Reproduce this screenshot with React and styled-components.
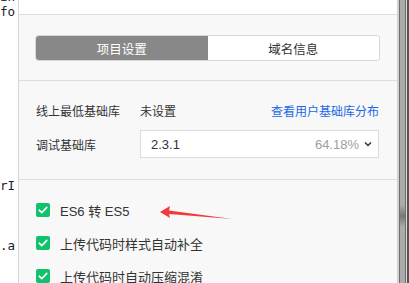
import React from "react";
import styled, { createGlobalStyle } from "styled-components";

const Global = createGlobalStyle`
  html, body { margin: 0; padding: 0; overflow: hidden; background: #fff; }
  body { font-family: "Noto Sans CJK SC", "Liberation Sans", sans-serif; }
`;

const Screen = styled.div`
  display: flex;
  width: 409px;
  height: 283px;
  overflow: hidden;
`;

const CodeStrip = styled.div`
  width: 18px;
  flex: none;
  background: #fff;
  border-right: 1px solid #d6d6d6;
  overflow: hidden;
  font-family: "DejaVu Sans Mono", "Liberation Mono", monospace;
  font-size: 12.5px;
  color: #1a1a2e;
`;

const CodeLine = styled.div`
  height: 14px;
  line-height: 14px;
  white-space: pre;
  margin-top: ${(p) => p.$mt || 0}px;
`;

const Panel = styled.div`
  flex: 1;
  background: #f8f8f8;
  display: flex;
  flex-direction: column;
  position: relative;
  color: #333;
`;

const Header = styled.div`
  height: 16px;
  background: #fff;
  border-bottom: 1px solid #dddddd;
`;

const Section = styled.div`
  padding: ${(p) => p.$pad};
  border-bottom: ${(p) => (p.$noBorder ? "none" : "1px solid #dddddd")};
`;

const Tabs = styled.div`
  display: flex;
  height: 24px;
  border-radius: 3px;
  overflow: hidden;
  box-shadow: 0 0 0 1px #d8d8d8;
`;

const Tab = styled.div`
  flex: 1;
  display: flex;
  align-items: center;
  justify-content: center;
  font-size: 12.5px;
  background: ${(p) => (p.$active ? "#888888" : "#ffffff")};
  color: ${(p) => (p.$active ? "#ffffff" : "#333")};
`;

const Row = styled.div`
  display: flex;
  align-items: center;
  height: ${(p) => p.$h}px;
  margin-top: ${(p) => p.$mt || 0}px;
  font-size: 12px;
`;

const Label = styled.div`
  width: 104px;
  flex: none;
  color: #333;
`;

const Value = styled.div`
  flex: 1;
  color: #333;
`;

const Link = styled.a`
  color: #2166e6;
  text-decoration: none;
  font-size: 12px;
`;

const Select = styled.div`
  flex: 1;
  height: 28px;
  box-sizing: border-box;
  border: 1px solid #dcdcdc;
  background: #fff;
  display: flex;
  align-items: center;
  padding: 0 6px 0 10px;
  font-family: "Liberation Sans", "Noto Sans CJK SC", sans-serif;
  font-size: 13px;
`;

const SelectValue = styled.span`
  flex: 1;
  color: #333;
`;

const Percent = styled.span`
  color: #a0a0a0;
  margin-right: 5px;
`;

const CheckList = styled.div`
  display: flex;
  flex-direction: column;
  gap: 19px;
`;

const CheckRow = styled.div`
  display: flex;
  align-items: center;
  height: 14px;
  font-size: 13px;
  color: #333;
`;

const Box = styled.span`
  width: 14px;
  height: 14px;
  border-radius: 2px;
  background: #0fc26b;
  display: inline-flex;
  align-items: center;
  justify-content: center;
  margin-right: 10px;
  flex: none;
`;

const CheckLabel = styled.span`
  font-family: "Liberation Sans", "Noto Sans CJK SC", sans-serif;
  white-space: nowrap;
`;

const Arrow = styled.svg`
  position: absolute;
  left: 139px;
  top: 203px;
`;

const Scrollbar = styled.div`
  width: 12px;
  flex: none;
  display: flex;
`;

const Stripe = styled.div`
  width: ${(p) => p.$w}px;
  background: ${(p) => p.$c};
  position: relative;
`;

const Grip = styled.div`
  position: absolute;
  left: 0;
  right: 0;
  top: 205px;
  height: 22px;
  background: linear-gradient(#aaa, #777 50%, #aaa);
`;

const Check = () => (
  <svg width="10" height="8" viewBox="0 0 10 8">
    <path d="M1.2 4.2 L3.8 6.6 L8.8 1.4" fill="none" stroke="#fff" strokeWidth="1.6" strokeLinecap="round" strokeLinejoin="round" />
  </svg>
);

export default function App() {
  return (
    <>
      <Global />
      <Screen>
        <CodeStrip>
          <CodeLine $mt={-10}>int</CodeLine>
          <CodeLine $mt={1}>fo</CodeLine>
          <CodeLine $mt={160}>rI</CodeLine>
          <CodeLine $mt={46}>.a</CodeLine>
        </CodeStrip>
        <Panel>
          <Header />
          <Section $pad="21px 18px 20px 17px">
            <Tabs>
              <Tab $active>项目设置</Tab>
              <Tab>域名信息</Tab>
            </Tabs>
          </Section>
          <Section $pad="19px 18px 21px 17px">
            <Row $h={20}>
              <Label>线上最低基础库</Label>
              <Value>未设置</Value>
              <Link>查看用户基础库分布</Link>
            </Row>
            <Row $h={28} $mt={10}>
              <Label>调试基础库</Label>
              <Select>
                <SelectValue>2.3.1</SelectValue>
                <Percent>64.18%</Percent>
                <svg width="8" height="6" viewBox="0 0 8 6">
                  <path d="M1 1.5 L4 4.5 L7 1.5" fill="none" stroke="#333" strokeWidth="1.5" />
                </svg>
              </Select>
            </Row>
          </Section>
          <Section $pad="23px 18px 0 17px" $noBorder>
            <CheckList>
              <CheckRow>
                <Box><Check /></Box>
                <CheckLabel>ES6 转 ES5</CheckLabel>
              </CheckRow>
              <CheckRow>
                <Box><Check /></Box>
                <CheckLabel>上传代码时样式自动补全</CheckLabel>
              </CheckRow>
              <CheckRow>
                <Box><Check /></Box>
                <CheckLabel>上传代码时自动压缩混淆</CheckLabel>
              </CheckRow>
            </CheckList>
          </Section>
          <Arrow width="76" height="20" viewBox="0 0 76 20">
            <polygon points="2,9 12,3 11,7.5 74,16 11,11 12,15" fill="#f23a3a" />
          </Arrow>
        </Panel>
        <Scrollbar>
          <Stripe $w={2} $c="#d2d2d2" />
          <Stripe $w={1} $c="#6f6f6f" />
          <Stripe $w={5} $c="#ababab"><Grip /></Stripe>
          <Stripe $w={1} $c="#6f6f6f" />
          <Stripe $w={1} $c="#d8d8d8" />
          <Stripe $w={2} $c="#555" />
        </Scrollbar>
      </Screen>
    </>
  );
}
